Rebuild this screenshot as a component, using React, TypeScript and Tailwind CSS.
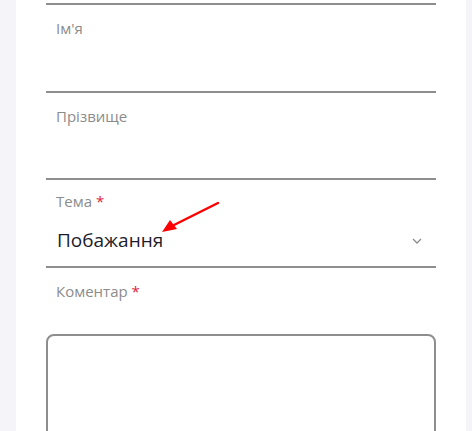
const font = { fontFamily: '"Open Sans", "Noto Sans", sans-serif' };

function Field({ label, required }: { label: string; required?: boolean }) {
    return (
        <div className="h-[88px] border-t-2 border-[#8e8e8e] pt-[11px] pl-[10px]">
            <span className="text-[15px] leading-[20px] text-[#8c8c8c]">
                {label}
                {required && <span className="ml-1 text-[#e0243d]">*</span>}
            </span>
        </div>
    );
}

export default function App() {
    return (
        <div className="h-[431px] w-[472px] overflow-hidden bg-[#f4f4f9]" style={font}>
            <div className="ml-[16px] h-full w-[450px] bg-white px-[30px] pt-[3px]">
                <Field label="Ім'я" />
                <div className="h-[87px] border-t-2 border-[#8e8e8e] pt-[11px] pl-[10px]">
                    <span className="text-[15px] leading-[20px] text-[#8c8c8c]">Прізвище</span>
                </div>
                <div className="relative h-[88px] border-t-2 border-[#8e8e8e] pt-[11px]">
                    <div className="pl-[10px] text-[15px] leading-[20px] text-[#8c8c8c]">
                        Тема <span className="text-[#e0243d]">*</span>
                    </div>
                    <div className="mt-[17px] flex items-center justify-between pl-[11px] pr-[14px]">
                        <span className="text-[19px] leading-[24px] text-[#1c1c2b]">Побажання</span>
                        <svg width="10" height="6" viewBox="0 0 10 6" className="mt-[2px]">
                            <path d="M1 1l4 4 4-4" fill="none" stroke="#8c8c8c" strokeWidth="1.3" />
                        </svg>
                    </div>
                    <svg
                        className="absolute left-[100px] top-[20px]"
                        width="80"
                        height="40"
                        viewBox="0 0 80 40"
                    >
                        <line x1="72" y1="3" x2="26" y2="26" stroke="#ff0000" strokeWidth="2.5" strokeLinecap="round" />
                        <polygon points="16,32 24,20 31,29" fill="#ff0000" />
                    </svg>
                </div>
                <div className="border-t-2 border-[#8e8e8e] pt-[11px] pl-[10px]">
                    <span className="text-[15px] leading-[20px] text-[#8c8c8c]">
                        Коментар <span className="text-[#e0243d]">*</span>
                    </span>
                </div>
                <div className="mt-[31px] h-[140px] rounded-[8px] border-2 border-[#8e8e8e]" />
            </div>
        </div>
    );
}
